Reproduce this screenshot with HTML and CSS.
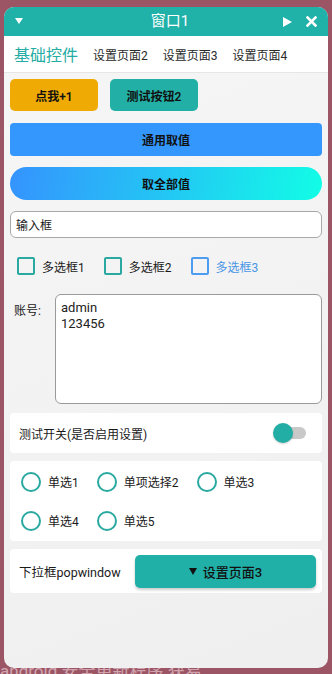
FILE: index.html
```html
<!DOCTYPE html>
<html lang="zh">
<head>
<meta charset="utf-8">
<title>窗口1</title>
<link rel="stylesheet" href="styles.css">
</head>
<body>
<div class="backdrop">
  <p>android 安全更新程序 获易</p>
</div>

<div class="window">
  <header class="titlebar">
    <svg class="tb-icon tb-menu" viewBox="0 0 8 6"><path d="M0 0H8L4 6Z" fill="#fff"/></svg>
    <span class="title">窗口1</span>
    <div class="tb-actions">
      <svg class="tb-icon tb-play" viewBox="0 0 9 10"><path d="M0 0L9 5L0 10Z" fill="#fff"/></svg>
      <svg class="tb-icon tb-close" viewBox="0 0 11 11"><path d="M1.5 1.5L9.5 9.5M9.5 1.5L1.5 9.5" stroke="#fff" stroke-width="2.6" stroke-linecap="square"/></svg>
    </div>
  </header>

  <nav class="tabs">
    <span class="tab active">基础控件</span>
    <span class="tab">设置页面2</span>
    <span class="tab">设置页面3</span>
    <span class="tab">设置页面4</span>
  </nav>

  <main class="content">
    <div class="btn-row">
      <button class="btn btn-orange">点我+1</button>
      <button class="btn btn-teal">测试按钮2</button>
    </div>

    <button class="btn-wide btn-blue">通用取值</button>
    <button class="btn-wide btn-grad">取全部值</button>

    <div class="input">输入框</div>

    <div class="checks">
      <label class="check"><span class="box"></span><span>多选框1</span></label>
      <label class="check"><span class="box"></span><span>多选框2</span></label>
      <label class="check blue"><span class="box"></span><span>多选框3</span></label>
    </div>

    <div class="account">
      <span class="acc-label">账号:</span>
      <div class="textarea">admin<br>123456</div>
    </div>

    <div class="card switch-card">
      <span>测试开关(是否启用设置)</span>
      <span class="switch"><span class="track"></span><span class="thumb"></span></span>
    </div>

    <div class="card radio-card">
      <label class="radio"><span class="circle"></span><span>单选1</span></label>
      <label class="radio"><span class="circle"></span><span>单项选择2</span></label>
      <label class="radio"><span class="circle"></span><span>单选3</span></label>
      <label class="radio"><span class="circle"></span><span>单选4</span></label>
      <label class="radio"><span class="circle"></span><span>单选5</span></label>
    </div>

    <div class="card dropdown-card">
      <span>下拉框popwindow</span>
      <button class="dropdown-btn"><svg class="dd-arrow" viewBox="0 0 8 7"><path d="M0 0H8L4 7Z" fill="#111"/></svg><span>设置页面3</span></button>
    </div>
  </main>
</div>
</body>
</html>
```

FILE: styles.css
```css
* { box-sizing: border-box; }

html, body {
  margin: 0;
  padding: 0;
}

body {
  width: 332px;
  height: 674px;
  overflow: hidden;
  position: relative;
  background: #9c5565;
  font-family: "Roboto", "Noto Sans CJK SC", sans-serif;
  color: #1a1a1a;
  display: flex;
  flex-direction: column;
  justify-content: flex-end;
}

.backdrop {
  color: rgba(255, 235, 240, 0.55);
  font-size: 17px;
  line-height: 22px;
  white-space: nowrap;
  margin-bottom: -8px;
}

.backdrop p {
  margin: 0;
  height: 22px;
}

.window {
  position: absolute;
  left: 4px;
  top: 7px;
  width: 324px;
  height: 661px;
  border-radius: 10px;
  overflow: hidden;
  background: linear-gradient(160deg, #f6f6f6 0%, #f2f2f2 60%, #efefef 100%);
  display: flex;
  flex-direction: column;
}

.titlebar {
  height: 29px;
  background: #20b1a9;
  display: grid;
  grid-template-columns: 1fr auto 1fr;
  align-items: center;
  padding: 0 11px;
  color: #fff;
  flex-shrink: 0;
}

.tb-icon { display: block; }

.tb-menu {
  width: 8px;
  height: 6px;
  margin-top: -1px;
}

.title {
  font-size: 15px;
  padding-left: 8px;
  line-height: 1;
}

.tb-actions {
  justify-self: end;
  display: flex;
  align-items: center;
  gap: 14px;
}

.tb-play {
  width: 9px;
  height: 10px;
}

.tb-close {
  width: 11px;
  height: 11px;
}

.tabs {
  height: 37px;
  background: #fff;
  border-bottom: 1px solid #e6e6e6;
  display: flex;
  align-items: center;
  padding: 0 0 0 10px;
  gap: 15px;
  flex-shrink: 0;
}

.tab {
  font-size: 12px;
  color: #2a2a2a;
  padding-top: 1px;
}

.tab.active {
  font-size: 16px;
  color: #25aca4;
  padding-top: 0;
}

.content {
  padding: 6px 6px 0;
  display: flex;
  flex-direction: column;
}

button {
  font-family: inherit;
  border: none;
  margin: 0;
  padding: 0;
  cursor: pointer;
}

.btn-row {
  display: flex;
  gap: 12px;
}

.btn {
  width: 88px;
  height: 32px;
  border-radius: 5px;
  font-size: 12px;
  font-weight: 600;
  color: #111;
}

.btn-orange { background: #f0aa04; }
.btn-teal { background: #22b0a6; }

.btn-wide {
  height: 33px;
  width: 100%;
  font-size: 12px;
  font-weight: 600;
  color: #111;
}

.btn-blue {
  margin-top: 12px;
  background: #3497fd;
  border-radius: 4px;
}

.btn-grad {
  margin-top: 11px;
  border-radius: 17px;
  background: linear-gradient(100deg, #3593fe 0%, #23c6f4 50%, #12fde6 100%);
}

.input {
  margin-top: 11px;
  height: 27px;
  background: #fff;
  border: 1px solid #a8a8a8;
  border-radius: 6px;
  font-size: 12px;
  padding-left: 5px;
  display: flex;
  align-items: center;
}

.checks {
  margin-top: 19px;
  height: 18px;
  display: flex;
  align-items: center;
  gap: 19px;
  padding-left: 7px;
}

.check {
  display: flex;
  align-items: center;
  gap: 7px;
  font-size: 12px;
  color: #1a1a1a;
}

.box {
  width: 18px;
  height: 18px;
  border: 2px solid #2aa9a1;
  border-radius: 2px;
  background: transparent;
}

.check.blue { color: #4a95e6; }
.check.blue .box { border-color: #4d9cf2; }

.account {
  margin-top: 19px;
  display: flex;
  gap: 14px;
  padding-left: 4px;
}

.acc-label {
  font-size: 12px;
  padding-top: 7px;
  width: 27px;
}

.textarea {
  flex: 1;
  height: 110px;
  background: #fff;
  border: 1px solid #9a9a9a;
  border-radius: 6px;
  font-size: 13px;
  line-height: 16px;
  padding: 5px 0 0 5px;
  color: #222;
}

.card {
  background: #fff;
  border-radius: 4px;
  margin-top: 9px;
}

.switch-card {
  height: 40px;
  display: flex;
  align-items: center;
  justify-content: space-between;
  padding: 0 16px 0 9px;
  font-size: 12px;
}

.switch {
  position: relative;
  width: 33px;
  height: 20px;
  display: block;
}

.track {
  position: absolute;
  left: 2px;
  right: 0;
  top: 4px;
  height: 12px;
  border-radius: 6px;
  background: #c9c9c9;
}

.thumb {
  position: absolute;
  left: 0;
  top: 0;
  width: 20px;
  height: 20px;
  border-radius: 50%;
  background: #22aea4;
  box-shadow: 0 1px 2px rgba(0, 0, 0, 0.2);
}

.radio-card {
  margin-top: 8px;
  height: 80px;
  display: flex;
  flex-wrap: wrap;
  align-content: space-around;
  padding: 1px 0 1px 11px;
  column-gap: 18px;
}

.radio {
  display: flex;
  align-items: center;
  gap: 7px;
  font-size: 12px;
  height: 22px;
}

.radio:nth-child(3) { margin-right: 40px; }

.circle {
  width: 20px;
  height: 20px;
  border: 2.5px solid #2aa9a1;
  border-radius: 50%;
}

.dropdown-card {
  margin-top: 8px;
  height: 44px;
  display: flex;
  align-items: center;
  justify-content: space-between;
  padding: 0 6px 0 9px;
  font-size: 12.5px;
}

.dropdown-btn {
  width: 181px;
  height: 33px;
  border-radius: 5px;
  background: #21b0a7;
  box-shadow: 0 2px 3px rgba(0, 0, 0, 0.2);
  font-size: 13px;
  font-weight: 500;
  color: #111;
  display: flex;
  align-items: center;
  justify-content: center;
  gap: 6px;
}

.dd-arrow {
  width: 8px;
  height: 7px;
  display: block;
}
```
